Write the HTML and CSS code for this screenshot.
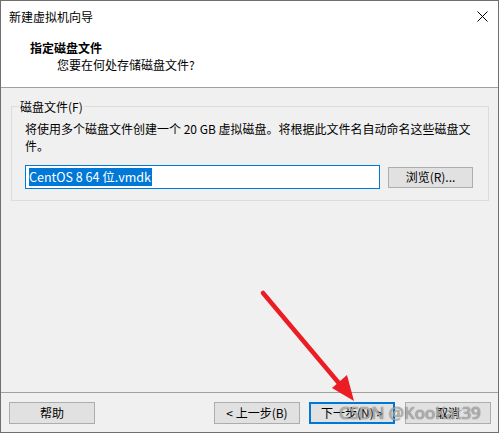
FILE: index.html
```html
<!DOCTYPE html>
<html lang="zh-CN">
<head>
    <meta charset="UTF-8">
    <title>新建虚拟机向导</title>
    <link rel="stylesheet" href="styles.css">
</head>
<body>
    <div class="window">
        <div class="top">
            <div class="titlebar">
                <span class="title">新建虚拟机向导</span>
                <svg class="close" width="11" height="11" viewBox="0 0 11 11">
                    <path d="M0.5 0.5 L10.5 10.5 M10.5 0.5 L0.5 10.5" stroke="#000" stroke-width="1" fill="none"/>
                </svg>
            </div>
            <div class="header">
                <div class="header-title">指定磁盘文件</div>
                <div class="header-sub">您要在何处存储磁盘文件?</div>
            </div>
        </div>
        <div class="content">
            <fieldset class="group">
                <legend>磁盘文件(F)</legend>
                <p class="desc">将使用多个磁盘文件创建一个 20 GB 虚拟磁盘。将根据此文件名自动命名这些磁盘文件。</p>
                <div class="file-row">
                    <div class="field"><span class="sel">CentOS 8 64 位.vmdk</span></div>
                    <button class="btn browse">浏览(R)...</button>
                </div>
            </fieldset>
        </div>
        <div class="footer">
            <button class="btn">帮助</button>
            <div class="nav">
                <button class="btn">&lt; 上一步(B)</button>
                <button class="btn default">下一步(N) &gt;</button>
                <button class="btn cancel">取消</button>
            </div>
        </div>
    </div>

    <svg class="arrow" width="499" height="433" viewBox="0 0 499 433">
        <line x1="263" y1="293" x2="343" y2="388" stroke="#ec1c24" stroke-width="4.5" stroke-linecap="round"/>
        <polygon points="354,401 332,388 347,375" fill="#ec1c24"/>
    </svg>
    <div class="watermark">CSDN @KooKat39</div>
</body>
</html>
```

FILE: styles.css
```css
body {
    margin: 0;
    font-family: "Noto Sans CJK SC", "Noto Sans", sans-serif;
    font-size: 12px;
    color: #000;
    background: #f0f0f0;
}
.window {
    width: 499px;
    height: 433px;
    box-sizing: border-box;
    border: 1px solid #6f6f6f;
    background-color: #f0f0f0;
    display: flex;
    flex-direction: column;
}
.top {
    background-color: #ffffff;
    border-bottom: 1px solid #a0a0a0;
}
.titlebar {
    height: 29px;
    display: flex;
    align-items: center;
    justify-content: space-between;
    padding: 0 10px 0 8px;
}
.title {
    line-height: 17px;
    padding-top: 1px;
}
.close {
    display: block;
    margin-top: 1px;
}
.header {
    padding: 9px 0 14px 29px;
    line-height: 17px;
}
.header-title {
    font-weight: bold;
}
.header-sub {
    padding-left: 27px;
}
.content {
    flex: 1;
    padding: 10px 9px 0 10px;
}
.group {
    margin: 0;
    border: 1px solid #dcdcdc;
    padding: 0 14px 11px 13px;
}
.group legend {
    padding: 0 1px;
    margin-left: -6px;
    line-height: 17px;
}
.desc {
    margin: 5px 0 0 0;
    line-height: 17px;
    word-break: break-all;
}
.file-row {
    display: flex;
    align-items: center;
    gap: 8px;
    margin-top: 11px;
}
.field {
    width: 355px;
    height: 24px;
    box-sizing: border-box;
    border: 1px solid #0078d7;
    background-color: #ffffff;
    padding: 2px 0 0 3px;
    line-height: 18px;
    font-size: 12.5px;
}
.sel {
    display: inline-block;
    background-color: #0078d7;
    color: #ffffff;
    padding: 0 1px 0 0;
}
.btn {
    font-family: inherit;
    font-size: 12px;
    color: #000;
    width: 86px;
    height: 22px;
    box-sizing: border-box;
    padding: 0;
    background-color: #e1e1e1;
    border: 1px solid #adadad;
    line-height: 18px;
}
.browse {
    width: 85px;
    height: 21px;
}
.btn.default {
    border: 2px solid #0078d7;
}
.footer {
    border-top: 1px solid #a0a0a0;
    padding: 9px 7px 8px 8px;
    display: flex;
    justify-content: space-between;
}
.nav {
    display: flex;
    gap: 9px;
}
.cancel {
    margin-left: 1px;
}
.arrow {
    position: absolute;
    left: 0;
    top: 0;
    pointer-events: none;
}
.watermark {
    position: absolute;
    left: 339px;
    top: 402px;
    font-family: "Noto Sans", sans-serif;
    font-size: 17px;
    line-height: 22px;
    color: rgba(235, 235, 235, 0.6);
    text-shadow: 0 0 1px rgba(60, 60, 60, 0.8), 0 0 1px rgba(60, 60, 60, 0.5);
    pointer-events: none;
}
```
